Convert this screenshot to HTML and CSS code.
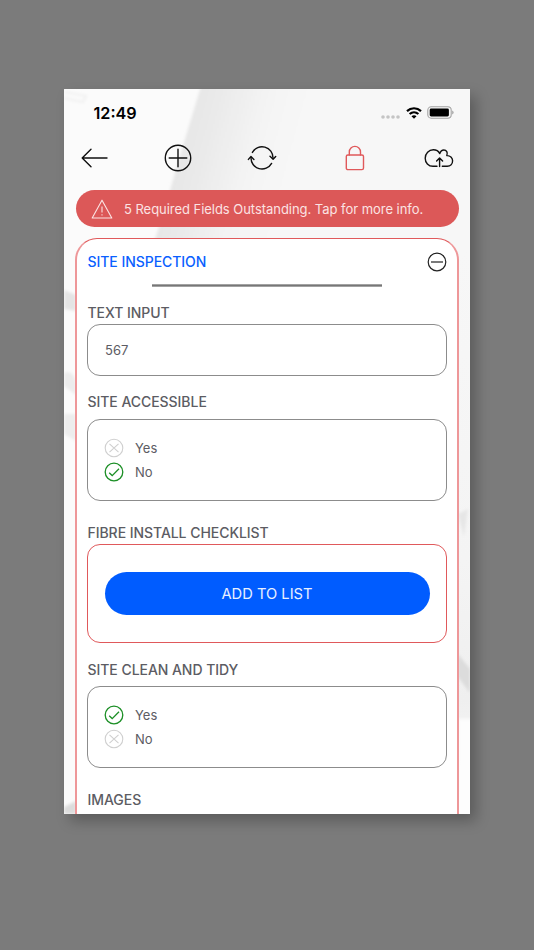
FILE: index.html
```html
<!DOCTYPE html>
<html lang="en">
<head>
    <meta charset="UTF-8">
    <meta name="viewport" content="width=device-width, initial-scale=1.0">
    <title>Site Inspection</title>
    <link rel="stylesheet" href="styles.css">
</head>
<body>

    <!-- Shared radio icons -->
    <svg class="symbols" width="0" height="0">
        <symbol id="icon-check" viewBox="0 0 20 20">
            <circle cx="10" cy="10" r="8.8"/>
            <path d="M5.2 10.8 L8.2 13.6 L15 6.8"/>
        </symbol>
        <symbol id="icon-cross" viewBox="0 0 20 20">
            <circle cx="10" cy="10" r="8.8"/>
            <path d="M5.5 5.9 L14.5 14.1 M14.5 5.9 L5.5 14.1"/>
        </symbol>
    </svg>

    <div class="phone">
        <svg class="backdrop" viewBox="0 0 406 725" preserveAspectRatio="none">
            <defs>
                <linearGradient id="fold" gradientUnits="userSpaceOnUse" x1="110" y1="70" x2="220" y2="100">
                    <stop offset="0" stop-color="#e6e6e6"/>
                    <stop offset="0.25" stop-color="#eaeaea"/>
                    <stop offset="0.6" stop-color="#f3f3f3"/>
                    <stop offset="1" stop-color="#f7f7f7"/>
                </linearGradient>
                <linearGradient id="side" x1="0" y1="0" x2="0" y2="1">
                    <stop offset="0" stop-color="#f7f7f7"/>
                    <stop offset="0.55" stop-color="#f4f4f4"/>
                    <stop offset="0.8" stop-color="#efefef"/>
                    <stop offset="1" stop-color="#fdfdfd"/>
                </linearGradient>
                <filter id="soft"><feGaussianBlur stdDeviation="1.5"/></filter>
            </defs>
            <rect width="406" height="725" fill="#fbfbfb"/>
            <path filter="url(#soft)" d="M138 -6 H412 V165 H86 Q100 125 112 80 Z" fill="url(#fold)"/>
            <path d="M380 160 H406 V725 H380 Z" fill="url(#side)"/>
            <g filter="url(#soft)">
                <path d="M1 3 L22 7 L19 13 L0 9" fill="none" stroke="#f0f0f0" stroke-width="2"/>
                <path d="M0 201 L12 206 V222 L0 220 Z" fill="#e4e4e4"/>
                <path d="M0 284 Q8 280 12 292 V306 L0 297 Z" fill="#ececec"/>
                <path d="M0 325 H12 V352 L0 345 Z" fill="#ededed"/>
                <path d="M0 718 L12 712 V725 H0 Z" fill="#dcdcdc"/>
                <path d="M394 425 L404 420 L400 448 Z" fill="#e6e6e6"/>
                <path d="M394 565 L406 580 V604 L394 588 Z" fill="#dcdcdc"/>
                <path d="M394 630 H410 V730 H394 Z" fill="#fdfdfd"/>
            </g>
        </svg>

        <div class="status-bar">
            <span class="time">12:49</span>
            <div class="status-icons">
                <svg class="signal" width="19" height="4" viewBox="0 0 19 4">
                    <circle cx="2" cy="2" r="1.8"/>
                    <circle cx="7" cy="2" r="1.8"/>
                    <circle cx="12" cy="2" r="1.8"/>
                    <circle cx="17" cy="2" r="1.8"/>
                </svg>
                <svg class="wifi" width="16" height="12" viewBox="0 0 16 12">
                    <path d="M1 4.1 C5 0.3 11 0.3 15 4.1"/>
                    <path d="M3.6 7 C6.2 4.7 9.8 4.7 12.4 7"/>
                    <path class="wifi-dot" d="M5.5 9.2 C6.9 8 9.1 8 10.5 9.2 L8 11.8 Z"/>
                </svg>
                <svg class="battery" width="27" height="13" viewBox="0 0 27 13">
                    <rect class="battery-case" x="0.8" y="0.8" width="23.4" height="11.4" rx="3.4"/>
                    <rect x="2.7" y="2.6" width="19.2" height="7.8" rx="1.4"/>
                    <path class="battery-tip" d="M25.2 4.5 Q26.6 5 26.6 6.5 Q26.6 8 25.2 8.5 Z"/>
                </svg>
            </div>
        </div>

        <div class="toolbar">
            <svg class="tool back" width="27" height="20" viewBox="0 0 27 20">
                <path d="M10 1.3 L1.2 10 L10 18.7 M1.2 10 H26"/>
            </svg>
            <svg class="tool add" width="28" height="28" viewBox="0 0 28 28">
                <circle cx="14" cy="14" r="12.7"/>
                <path d="M14 5.2 V22.8 M5.2 14 H22.8"/>
            </svg>
            <svg class="tool sync" width="30" height="28" viewBox="0 0 30 28">
                <path d="M5.4 8.4 A11 11 0 0 1 26 14 M24.6 19.4 A11 11 0 0 1 4 13.6"/>
                <path d="M23 12.2 L26.1 15.2 L28.7 12.4 M1.4 15.4 L4 12.5 L6.9 15.4"/>
            </svg>
            <svg class="tool lock" width="20" height="26" viewBox="0 0 20 26">
                <rect x="1.3" y="10" width="17.2" height="14.6" rx="1.6"/>
                <path d="M4.3 10 V7 A5.6 5.6 0 0 1 15.5 7 V10"/>
            </svg>
            <svg class="tool cloud" width="30" height="20" viewBox="0 0 30 20">
                <path d="M13 18.3 H9 C4.4 18.3 1.2 14.6 1.2 10.2 C1.2 5.4 4.9 1.8 9.3 1.8 C12.2 1.8 14.6 3.3 15.8 5.6 C16.5 3.4 18 2 19.9 2 C22.4 2 24.1 4.4 22.8 7.6 C26.1 7.4 28.6 9.7 28.6 12.8 C28.6 15.9 26.4 18.3 23.2 18.3 H18.3"/>
                <path d="M15.6 18.5 V10.6 M12.6 13.1 L15.6 10 L18.6 13.1"/>
            </svg>
        </div>

        <div class="alert">
            <svg class="alert-icon" width="22" height="20" viewBox="0 0 22 20">
                <path d="M11 1.2 L20.8 19 H1.2 Z M11 7.5 V13.6 M11 15.2 V16.6"/>
            </svg>
            <span>5 Required Fields Outstanding. Tap for more info.</span>
        </div>

        <div class="card">
            <div class="card-header">
                <h1>SITE INSPECTION</h1>
                <svg class="collapse" width="20" height="20" viewBox="0 0 20 20">
                    <circle cx="10" cy="10" r="8.8"/>
                    <path d="M4 10 H16"/>
                </svg>
            </div>
            <div class="divider"></div>

            <h2>TEXT INPUT</h2>
            <div class="field input">567</div>

            <h2 class="label-accessible">SITE ACCESSIBLE</h2>
            <div class="field options">
                <div class="option"><svg class="radio"><use href="#icon-cross"/></svg>Yes</div>
                <div class="option"><svg class="radio selected"><use href="#icon-check"/></svg>No</div>
            </div>

            <h2 class="label-checklist">FIBRE INSTALL CHECKLIST</h2>
            <div class="field required">
                <button class="add-button">ADD TO LIST</button>
            </div>

            <h2 class="label-tidy">SITE CLEAN AND TIDY</h2>
            <div class="field options">
                <div class="option"><svg class="radio selected"><use href="#icon-check"/></svg>Yes</div>
                <div class="option"><svg class="radio"><use href="#icon-cross"/></svg>No</div>
            </div>

            <h2 class="label-images">IMAGES</h2>
        </div>
    </div>

</body>
</html>
```
FILE: styles.css
```css
* {
    margin: 0;
    padding: 0;
    box-sizing: border-box;
    font-family: Inter, "Liberation Sans", sans-serif;
}

body {
    background-color: #7b7b7b;
    height: 950px;
    padding-top: 89px;
    overflow: hidden;
}

svg {
    display: block;
    flex-shrink: 0;
    fill: none;
}

.symbols {
    position: absolute;
}

.phone {
    position: relative;
    width: 406px;
    height: 725px;
    margin-left: 64px;
    padding: 0 11px;
    background: #fbfbfb;
    border-radius: 1px;
    overflow: hidden;
    box-shadow: 6px 7px 14px rgba(0, 0, 0, 0.26);
}

.backdrop {
    position: absolute;
    top: 0;
    left: 0;
    width: 100%;
    height: 100%;
}

.status-bar,
.toolbar,
.alert,
.card {
    position: relative;
    display: flex;
}

/* Status bar */
.status-bar {
    height: 47px;
    padding: 0 5px 0 18px;
    align-items: center;
    justify-content: space-between;
}

.time {
    padding-left: 0.5px;
    font-size: 16.2px;
    font-weight: 600;
    color: #000;
}

.status-icons {
    display: flex;
    align-items: center;
    gap: 5.5px;
}

.signal {
    margin-top: 8px;
    fill: #c4c4c4;
}

.wifi {
    stroke: #000;
    stroke-width: 2.2;
}

.wifi-dot {
    fill: #000;
    stroke: none;
}

.battery {
    fill: #000;
}

.battery-case {
    fill: none;
    stroke: #a3a3a3;
    stroke-width: 1.1;
}

.battery-tip {
    fill: #a3a3a3;
}

/* Toolbar */
.toolbar {
    height: 43px;
    padding-left: 5.5px;
    align-items: center;
}

.tool {
    stroke: #111;
    stroke-width: 1.4;
    stroke-linecap: round;
    stroke-linejoin: round;
}

.add {
    margin-left: 56px;
}

.sync {
    margin-left: 55.5px;
}

.lock {
    margin-left: 68px;
    stroke: #e0595b;
}

.cloud {
    margin-left: 59px;
}

/* Alert */
.alert {
    height: 37px;
    margin: 11px 0.5px 0;
    padding: 1px 0 0 15.5px;
    align-items: center;
    gap: 11px;
    border-radius: 19px;
    background: #dc5858;
    color: #fbe3e3;
    font-size: 13px;
    letter-spacing: -0.04px;
    white-space: nowrap;
}

.alert-icon {
    stroke: #fbe3e3;
    stroke-width: 1.1;
    stroke-linejoin: round;
}

/* Card */
.card {
    flex-direction: column;
    height: 620px;
    margin-top: 11px;
    padding: 0 10px;
    border: 2px solid #ee9799;
    border-top: 1px solid #e0595b;
    border-radius: 22px;
    background: #fff;
}

.card-header {
    display: flex;
    height: 45px;
    align-items: center;
    justify-content: space-between;
}

h1,
h2 {
    padding-left: 0.5px;
    font-size: 14px;
    font-weight: 500;
    line-height: 18px;
    letter-spacing: -0.05px;
    color: #5c5c63;
}

h1 {
    color: #0a5fff;
}

.collapse {
    margin-right: 0.5px;
    stroke: #222;
    stroke-width: 1.2;
}

.divider {
    width: 230px;
    height: 3px;
    margin: 0 auto 17px;
    border: solid #a2a2a2;
    border-width: 1px 0;
    background: #777;
}

.field {
    border: 1px solid #8c8c8c;
    border-radius: 13px;
    background: #fff;
    font-size: 13px;
    color: #5c5c63;
}

.input {
    height: 52px;
    margin-top: 2px;
    padding-left: 17px;
    line-height: 51px;
}

.options {
    height: 82px;
    padding: 16px;
}

.option {
    display: flex;
    height: 24px;
    align-items: center;
    gap: 11px;
}

.radio {
    width: 20px;
    height: 20px;
    stroke: #cfcfcf;
    stroke-width: 1.1;
}

.radio.selected {
    stroke: #1c8f26;
    stroke-width: 1.3;
}

.required {
    height: 99px;
    padding: 27px 16.5px;
    border-color: #e0595b;
}

.add-button {
    display: block;
    width: 100%;
    height: 43px;
    border: none;
    border-radius: 22px;
    background: #005cff;
    color: #e9f0ff;
    font-size: 14.7px;
}

.label-accessible {
    margin: 17px 0 8px;
}

.label-checklist {
    margin: 23px 0 2px;
}

.label-tidy {
    margin: 18px 0 7px;
}

.label-images {
    margin-top: 23px;
}
```
